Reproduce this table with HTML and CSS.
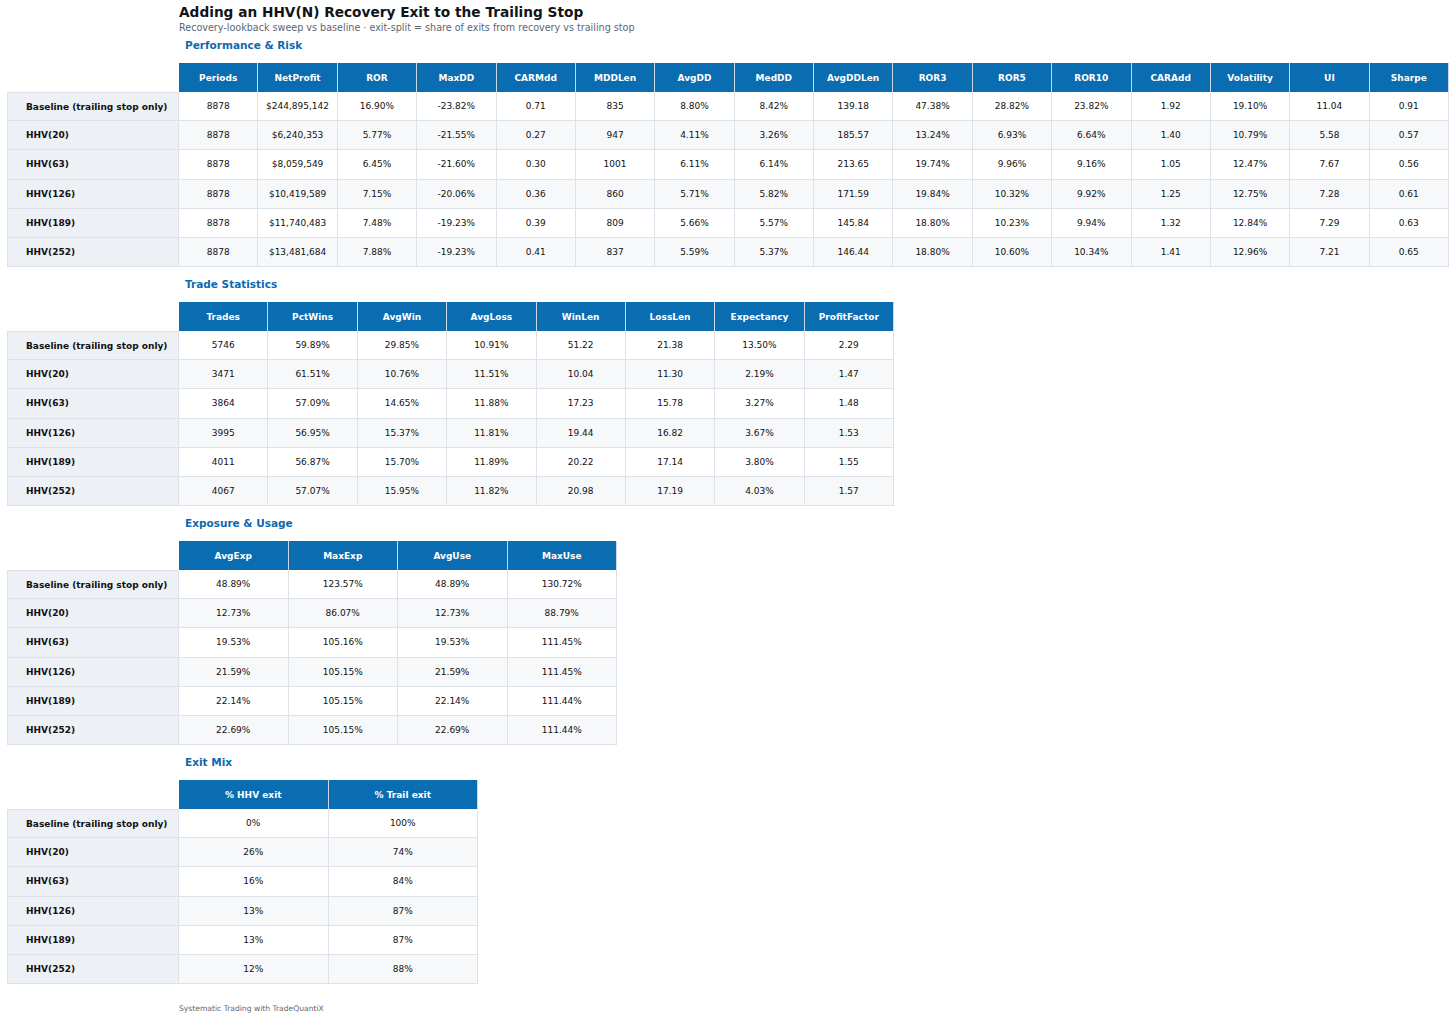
FILE: index.html
```html
<!DOCTYPE html>
<html lang="en">
<head>
<meta charset="utf-8">
<title>Adding an HHV(N) Recovery Exit to the Trailing Stop</title>
<link rel="stylesheet" href="styles.css">
</head>
<body>
<div class="page">
  <header class="head">
    <h1 class="title">Adding an HHV(N) Recovery Exit to the Trailing Stop</h1>
    <p class="subtitle">Recovery-lookback sweep vs baseline · exit-split = share of exits from recovery vs trailing stop</p>
  </header>

  <section class="section">
    <h2 class="section-title">Performance &amp; Risk</h2>
    <div class="grid grid-16">
      <div class="corner"></div>
      <div class="th">Periods</div><div class="th">NetProfit</div><div class="th">ROR</div><div class="th">MaxDD</div><div class="th">CARMdd</div><div class="th">MDDLen</div><div class="th">AvgDD</div><div class="th">MedDD</div><div class="th">AvgDDLen</div><div class="th">ROR3</div><div class="th">ROR5</div><div class="th">ROR10</div><div class="th">CARAdd</div><div class="th">Volatility</div><div class="th">UI</div><div class="th">Sharpe</div>

      <div class="rl first">Baseline (trailing stop only)</div>
      <div class="td">8878</div><div class="td">$244,895,142</div><div class="td">16.90%</div><div class="td">-23.82%</div><div class="td">0.71</div><div class="td">835</div><div class="td">8.80%</div><div class="td">8.42%</div><div class="td">139.18</div><div class="td">47.38%</div><div class="td">28.82%</div><div class="td">23.82%</div><div class="td">1.92</div><div class="td">19.10%</div><div class="td">11.04</div><div class="td">0.91</div>

      <div class="rl">HHV(20)</div>
      <div class="td alt">8878</div><div class="td alt">$6,240,353</div><div class="td alt">5.77%</div><div class="td alt">-21.55%</div><div class="td alt">0.27</div><div class="td alt">947</div><div class="td alt">4.11%</div><div class="td alt">3.26%</div><div class="td alt">185.57</div><div class="td alt">13.24%</div><div class="td alt">6.93%</div><div class="td alt">6.64%</div><div class="td alt">1.40</div><div class="td alt">10.79%</div><div class="td alt">5.58</div><div class="td alt">0.57</div>

      <div class="rl">HHV(63)</div>
      <div class="td">8878</div><div class="td">$8,059,549</div><div class="td">6.45%</div><div class="td">-21.60%</div><div class="td">0.30</div><div class="td">1001</div><div class="td">6.11%</div><div class="td">6.14%</div><div class="td">213.65</div><div class="td">19.74%</div><div class="td">9.96%</div><div class="td">9.16%</div><div class="td">1.05</div><div class="td">12.47%</div><div class="td">7.67</div><div class="td">0.56</div>

      <div class="rl">HHV(126)</div>
      <div class="td alt">8878</div><div class="td alt">$10,419,589</div><div class="td alt">7.15%</div><div class="td alt">-20.06%</div><div class="td alt">0.36</div><div class="td alt">860</div><div class="td alt">5.71%</div><div class="td alt">5.82%</div><div class="td alt">171.59</div><div class="td alt">19.84%</div><div class="td alt">10.32%</div><div class="td alt">9.92%</div><div class="td alt">1.25</div><div class="td alt">12.75%</div><div class="td alt">7.28</div><div class="td alt">0.61</div>

      <div class="rl">HHV(189)</div>
      <div class="td">8878</div><div class="td">$11,740,483</div><div class="td">7.48%</div><div class="td">-19.23%</div><div class="td">0.39</div><div class="td">809</div><div class="td">5.66%</div><div class="td">5.57%</div><div class="td">145.84</div><div class="td">18.80%</div><div class="td">10.23%</div><div class="td">9.94%</div><div class="td">1.32</div><div class="td">12.84%</div><div class="td">7.29</div><div class="td">0.63</div>

      <div class="rl">HHV(252)</div>
      <div class="td alt">8878</div><div class="td alt">$13,481,684</div><div class="td alt">7.88%</div><div class="td alt">-19.23%</div><div class="td alt">0.41</div><div class="td alt">837</div><div class="td alt">5.59%</div><div class="td alt">5.37%</div><div class="td alt">146.44</div><div class="td alt">18.80%</div><div class="td alt">10.60%</div><div class="td alt">10.34%</div><div class="td alt">1.41</div><div class="td alt">12.96%</div><div class="td alt">7.21</div><div class="td alt">0.65</div>
    </div>
  </section>

  <section class="section">
    <h2 class="section-title">Trade Statistics</h2>
    <div class="grid grid-8">
      <div class="corner"></div>
      <div class="th">Trades</div><div class="th">PctWins</div><div class="th">AvgWin</div><div class="th">AvgLoss</div><div class="th">WinLen</div><div class="th">LossLen</div><div class="th">Expectancy</div><div class="th">ProfitFactor</div>

      <div class="rl first">Baseline (trailing stop only)</div>
      <div class="td">5746</div><div class="td">59.89%</div><div class="td">29.85%</div><div class="td">10.91%</div><div class="td">51.22</div><div class="td">21.38</div><div class="td">13.50%</div><div class="td">2.29</div>

      <div class="rl">HHV(20)</div>
      <div class="td alt">3471</div><div class="td alt">61.51%</div><div class="td alt">10.76%</div><div class="td alt">11.51%</div><div class="td alt">10.04</div><div class="td alt">11.30</div><div class="td alt">2.19%</div><div class="td alt">1.47</div>

      <div class="rl">HHV(63)</div>
      <div class="td">3864</div><div class="td">57.09%</div><div class="td">14.65%</div><div class="td">11.88%</div><div class="td">17.23</div><div class="td">15.78</div><div class="td">3.27%</div><div class="td">1.48</div>

      <div class="rl">HHV(126)</div>
      <div class="td alt">3995</div><div class="td alt">56.95%</div><div class="td alt">15.37%</div><div class="td alt">11.81%</div><div class="td alt">19.44</div><div class="td alt">16.82</div><div class="td alt">3.67%</div><div class="td alt">1.53</div>

      <div class="rl">HHV(189)</div>
      <div class="td">4011</div><div class="td">56.87%</div><div class="td">15.70%</div><div class="td">11.89%</div><div class="td">20.22</div><div class="td">17.14</div><div class="td">3.80%</div><div class="td">1.55</div>

      <div class="rl">HHV(252)</div>
      <div class="td alt">4067</div><div class="td alt">57.07%</div><div class="td alt">15.95%</div><div class="td alt">11.82%</div><div class="td alt">20.98</div><div class="td alt">17.19</div><div class="td alt">4.03%</div><div class="td alt">1.57</div>
    </div>
  </section>

  <section class="section">
    <h2 class="section-title">Exposure &amp; Usage</h2>
    <div class="grid grid-4">
      <div class="corner"></div>
      <div class="th">AvgExp</div><div class="th">MaxExp</div><div class="th">AvgUse</div><div class="th">MaxUse</div>

      <div class="rl first">Baseline (trailing stop only)</div>
      <div class="td">48.89%</div><div class="td">123.57%</div><div class="td">48.89%</div><div class="td">130.72%</div>

      <div class="rl">HHV(20)</div>
      <div class="td alt">12.73%</div><div class="td alt">86.07%</div><div class="td alt">12.73%</div><div class="td alt">88.79%</div>

      <div class="rl">HHV(63)</div>
      <div class="td">19.53%</div><div class="td">105.16%</div><div class="td">19.53%</div><div class="td">111.45%</div>

      <div class="rl">HHV(126)</div>
      <div class="td alt">21.59%</div><div class="td alt">105.15%</div><div class="td alt">21.59%</div><div class="td alt">111.45%</div>

      <div class="rl">HHV(189)</div>
      <div class="td">22.14%</div><div class="td">105.15%</div><div class="td">22.14%</div><div class="td">111.44%</div>

      <div class="rl">HHV(252)</div>
      <div class="td alt">22.69%</div><div class="td alt">105.15%</div><div class="td alt">22.69%</div><div class="td alt">111.44%</div>
    </div>
  </section>

  <section class="section">
    <h2 class="section-title">Exit Mix</h2>
    <div class="grid grid-2">
      <div class="corner"></div>
      <div class="th">% HHV exit</div><div class="th">% Trail exit</div>

      <div class="rl first">Baseline (trailing stop only)</div>
      <div class="td">0%</div><div class="td">100%</div>

      <div class="rl">HHV(20)</div>
      <div class="td alt">26%</div><div class="td alt">74%</div>

      <div class="rl">HHV(63)</div>
      <div class="td">16%</div><div class="td">84%</div>

      <div class="rl">HHV(126)</div>
      <div class="td alt">13%</div><div class="td alt">87%</div>

      <div class="rl">HHV(189)</div>
      <div class="td">13%</div><div class="td">87%</div>

      <div class="rl">HHV(252)</div>
      <div class="td alt">12%</div><div class="td alt">88%</div>
    </div>
  </section>

  <footer class="foot">Systematic Trading with TradeQuantiX</footer>
</div>
</body>
</html>
```

FILE: styles.css
```css
* { box-sizing: border-box; }

html, body {
  margin: 0;
  padding: 0;
  background: #ffffff;
}

body {
  font-family: "DejaVu Sans", "Liberation Sans", sans-serif;
  color: #111111;
}

.page {
  width: 1456px;
  padding: 3px 0 0 7px;
}

.head {
  margin-left: 172px;
  height: 25px;
}

.title {
  margin: 0;
  font-size: 13.7px;
  font-weight: bold;
  line-height: 19px;
  color: #111418;
}

.subtitle {
  margin: 0;
  font-size: 9.6px;
  line-height: 12px;
  color: #5c6673;
}

.section-title {
  margin: 0 0 0 178px;
  height: 35px;
  font-size: 10.5px;
  font-weight: bold;
  line-height: 35px;
  color: #0f68ad;
}

.grid {
  display: grid;
  grid-auto-rows: 29.15px;
}

.grid-16 { grid-template-columns: 172px repeat(16, 79.375px); }
.grid-8  { grid-template-columns: 172px repeat(8, 89.375px); }
.grid-4  { grid-template-columns: 172px repeat(4, 109.5px); }
.grid-2  { grid-template-columns: 172px repeat(2, 149.5px); }

.corner { background: #ffffff; }

.th {
  display: flex;
  align-items: center;
  justify-content: center;
  background: #0a6cb1;
  color: #ffffff;
  font-size: 9px;
  font-weight: bold;
  border-right: 1px solid #c9d7e6;
}

.rl {
  display: flex;
  align-items: center;
  padding-left: 18px;
  background: #edf0f5;
  font-size: 9px;
  font-weight: bold;
  color: #111111;
  border-left: 1px solid #dde1e8;
  border-right: 1px solid #dde1e8;
  border-bottom: 1px solid #dde1e8;
}

.rl.first { border-top: 1px solid #dde1e8; }

.td {
  display: flex;
  align-items: center;
  justify-content: center;
  background: #ffffff;
  font-size: 9px;
  color: #111111;
  border-right: 1px solid #dde1e8;
  border-bottom: 1px solid #dde1e8;
}

.td.alt { background: #f7f8fa; }

.foot {
  margin: 20px 0 0 172px;
  font-size: 7.6px;
  line-height: 10px;
  color: #5f6875;
}
```
